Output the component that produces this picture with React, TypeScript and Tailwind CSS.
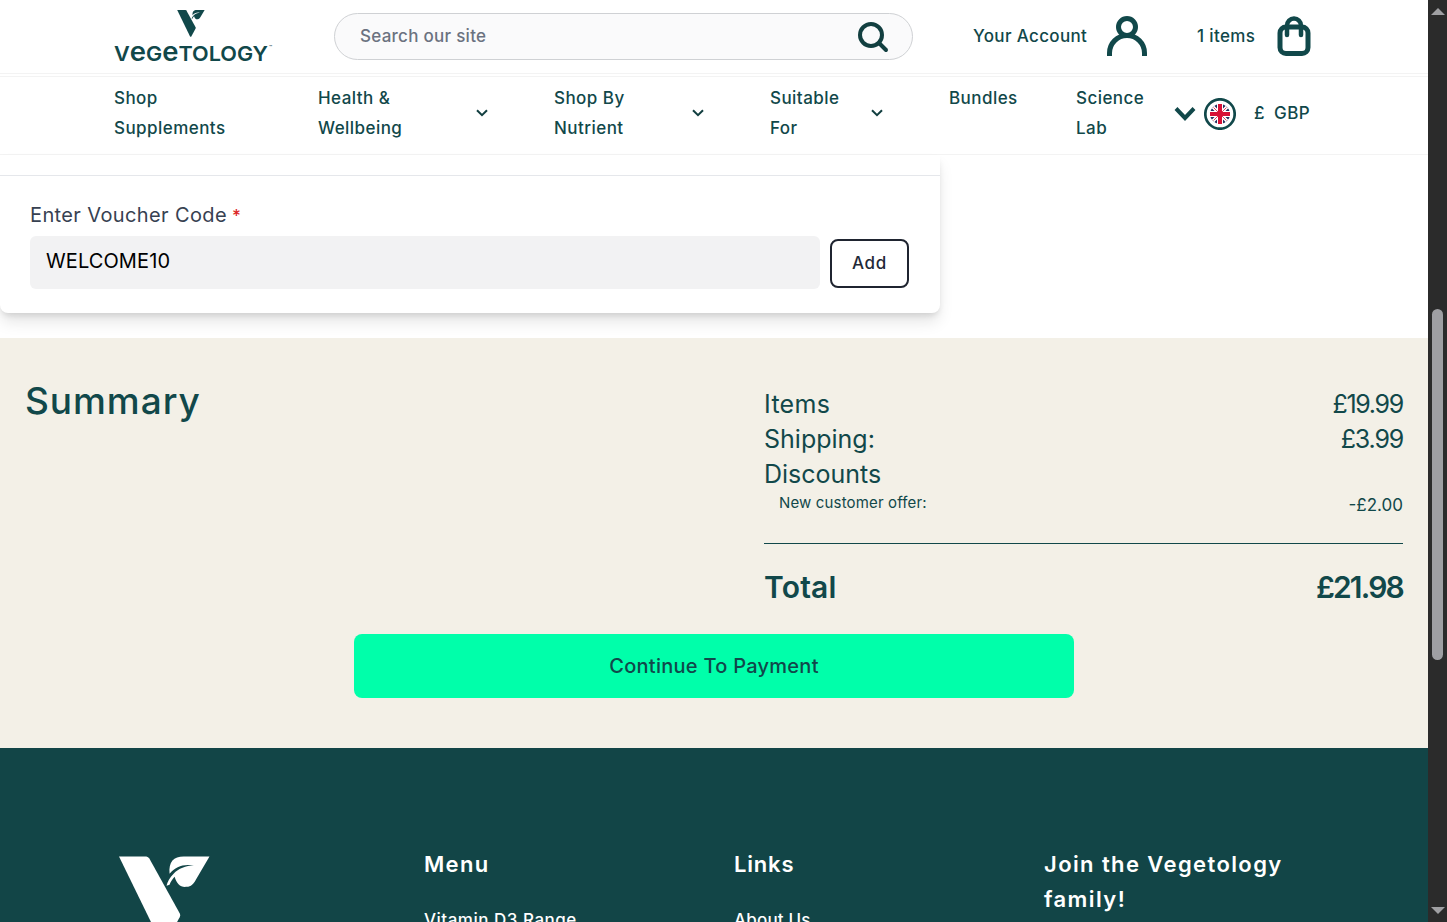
import React from 'react';

interface NavItem {
  lines: string[];
  width: string;
  hasMenu?: boolean;
}

const navItems: NavItem[] = [
  { lines: ['Shop', 'Supplements'], width: 'w-[204px]' },
  { lines: ['Health &', 'Wellbeing'], width: 'w-[236px]', hasMenu: true },
  { lines: ['Shop By', 'Nutrient'], width: 'w-[216px]', hasMenu: true },
  { lines: ['Suitable', 'For'], width: 'w-[179px]', hasMenu: true },
  { lines: ['Bundles'], width: 'w-[127px]' },
  { lines: ['Science', 'Lab'], width: 'w-[98px]' },
];

function ChevronIcon() {
  return (
    <svg className="h-2 w-3" viewBox="0 0 12 8" fill="none" stroke="#123f40" strokeWidth="2">
      <path d="M1 1.2 6 6.2 11 1.2" />
    </svg>
  );
}

function LeafMark({ className }: { className: string }) {
  return (
    <svg className={className} viewBox="0 0 90 88" fill="currentColor">
      <path d="M0 0H27Q29 .3 30 2L60 56Q61 58 60 60L46 86Q44 89 42 86Z" />
      <path d="M89.5 0H64C54 0 49 5 50 17C56 10 64 7 74 9C66 9 59 12 54 17C50 21 48 25 47 29L50 28C51 25 53 22 55 20C57 27 61 31 67 30C71 30 74 27 76 23Z" />
    </svg>
  );
}

function Logo() {
  return (
    <div className="w-[160px] text-[#11484a]">
      <LeafMark className="ml-[63px] h-[27px] w-7" />
      <svg className="-mt-2 block h-[42px] w-[160px] overflow-visible" viewBox="0 0 160 42" fill="currentColor">
        <text
          y="31.5"
          textLength="154"
          lengthAdjust="spacingAndGlyphs"
          className="font-['Inter'] text-[20.5px] font-semibold"
        >
          V<tspan fontSize="26">e</tspan>G<tspan fontSize="26">e</tspan>TOLOGY
        </text>
        <text x="155" y="20" className="font-['Inter'] text-[5px]">™</text>
      </svg>
    </div>
  );
}

function TopBar() {
  return (
    <div className="flex h-[74px] border-b border-[#f3f3f3] pl-[114px] pt-[10px]">
      <Logo />
      <div className="ml-[60px] mt-[3px] flex h-[47px] w-[579px] items-center justify-between rounded-full border border-[#cfd1d4] bg-[#fafafb] pl-[25px] pr-[23px]">
        <span className="text-[17px] tracking-[0.27px] text-[#6b7280]">Search our site</span>
        <svg className="h-8 w-8" viewBox="0 0 32 32" fill="none" stroke="#123f40" strokeWidth="4">
          <circle cx="14" cy="14" r="11" />
          <path d="M22 22 29 29" strokeLinecap="round" />
        </svg>
      </div>
      <div className="ml-[60px] flex h-[52px] items-center tracking-[0.35px]">
        <span className="w-[134px] whitespace-nowrap pt-px">Your Account</span>
        <svg className="h-10 w-10" viewBox="0 0 40 40" fill="none" stroke="#11484a" strokeWidth="5">
          <circle cx="20" cy="11" r="8.5" />
          <path d="M2.5 40V37a17.5 17.5 0 0 1 35 0v3" />
        </svg>
        <span className="ml-[50px] w-[80px] whitespace-nowrap pt-px">1 items</span>
        <svg className="h-10 w-[34px]" viewBox="0 0 34 40" fill="none" stroke="#11484a" strokeWidth="5">
          <rect x="3" y="11" width="28" height="26.5" rx="6" />
          <path d="M10 19V9.5a7 7 0 0 1 14 0V19" strokeWidth="4.5" strokeLinecap="round" />
        </svg>
      </div>
    </div>
  );
}

function FlagIcon() {
  return (
    <svg className="h-8 w-8" viewBox="0 0 32 32" fill="none">
      <circle cx="16" cy="16" r="14.7" fill="#fff" stroke="#11484a" strokeWidth="2.7" />
      <circle cx="16" cy="16" r="10" fill="#26315f" />
      <path d="M9 9 23 23M23 9 9 23" stroke="#fff" strokeWidth="3.4" />
      <path d="M16 6V26M6 16H26" stroke="#fff" strokeWidth="6" />
      <path d="M9.5 9.5 22.5 22.5M22.5 9.5 9.5 22.5" stroke="#d80f34" strokeWidth="0.8" />
      <path d="M16 6V26M6 16H26" stroke="#d80f34" strokeWidth="4" />
    </svg>
  );
}

function NavBar() {
  return (
    <nav className="mt-[2px] flex h-[79px] border-y border-[#f3f3f3] pl-[114px] pt-[6px] leading-[30px] tracking-[0.45px]">
      {navItems.map((item) => (
        <div key={item.lines.join(' ')} className={`flex shrink-0 justify-between ${item.width}`}>
          <div className="whitespace-nowrap">
            {item.lines.map((line) => (
              <div key={line}>{line}</div>
            ))}
          </div>
          {item.hasMenu && (
            <div className="flex h-[60px] items-center pr-[66px]">
              <ChevronIcon />
            </div>
          )}
        </div>
      ))}
      <div className="flex h-[61px] items-center">
        <svg className="h-4 w-[22px]" viewBox="0 0 22 16" fill="none" stroke="#11484a" strokeWidth="4">
          <path d="M2 2.5 11 12 20 2.5" />
        </svg>
        <div className="ml-2">
          <FlagIcon />
        </div>
        <span className="ml-[18px] w-5 pb-px">£</span>
        <span className="pb-px">GBP</span>
      </div>
    </nav>
  );
}

function VoucherForm() {
  return (
    <div className="h-[183px] bg-white">
      <div className="h-[158px] w-[940px] rounded-b-lg bg-white pt-5 shadow-[0_10px_15px_-1px_rgba(0,0,0,0.1),0_4px_6px_-2px_rgba(0,0,0,0.12)]">
        <div className="border-t border-[#e5e7eb] pl-[30px] pt-[25px]">
          <label className="block h-[29px] text-[20px] font-normal leading-[28px] tracking-[0.38px] text-[#374151]">
            Enter Voucher Code<span className="ml-[5px] text-[17px] font-medium text-[#dc2626]">*</span>
          </label>
          <div className="mt-[6px] flex gap-[10px]">
            <div className="h-[53px] w-[790px] rounded-md bg-[#f2f2f3] pl-4 text-[20px] font-normal leading-[51px] tracking-[0.1px] text-black">
              WELCOME10
            </div>
            <button className="mt-[3px] h-[49px] w-[79px] rounded-lg border-2 border-[#1f2430] bg-white tracking-[0.7px] text-[#1f2937]">
              Add
            </button>
          </div>
        </div>
      </div>
    </div>
  );
}

function Summary() {
  return (
    <section className="h-[410px] bg-[#f3f0e7] px-[25px] pt-[41px]">
      <div className="flex justify-between">
        <h2 className="text-[37px] leading-[44px] tracking-[0.95px]">Summary</h2>
        <div className="w-[639px] pt-2 text-[25px] font-normal leading-[35px]">
          <div className="flex justify-between">
            <span className="tracking-[0.3px]">Items</span>
            <span className="tracking-[-1.3px]">£19.99</span>
          </div>
          <div className="flex justify-between">
            <span>Shipping:</span>
            <span className="tracking-[-1.2px]">£3.99</span>
          </div>
          <div>Discounts</div>
          <div className="flex justify-between pl-[15px] text-[15px] leading-[22px]">
            <span className="tracking-[0.15px]">New customer offer:</span>
            <span className="pt-[2px] text-[17px]">-£2.00</span>
          </div>
          <div className="mt-[27px] flex h-[91px] justify-between border-t border-[#11484a] pt-[26px] text-[30px] font-semibold">
            <span className="tracking-[0.2px]">Total</span>
            <span className="tracking-[-1.8px]">£21.98</span>
          </div>
        </div>
      </div>
      <button className="mx-auto block h-16 w-[720px] rounded-lg bg-[#00ffaa] text-[20px] tracking-[0.27px]">
        Continue To Payment
      </button>
    </section>
  );
}

function Footer() {
  return (
    <footer className="flex h-[174px] overflow-hidden bg-[#124547] pl-[119px] pt-[99px] text-white">
      <div className="w-[305px] shrink-0 pt-[9px]">
        <LeafMark className="h-[90px] w-[91px]" />
      </div>
      <div className="w-[310px] shrink-0">
        <h3 className="text-[22px] font-semibold leading-[35px] tracking-[1.3px]">Menu</h3>
        <p className="mt-[23px] leading-[30px] tracking-[0.5px]">Vitamin D3 Range</p>
      </div>
      <div className="w-[310px] shrink-0">
        <h3 className="text-[22px] font-semibold leading-[35px] tracking-[0.8px]">Links</h3>
        <p className="mt-[23px] leading-[30px] tracking-[0.2px]">About Us</p>
      </div>
      <h3 className="whitespace-nowrap text-[22px] font-semibold leading-[35px] tracking-[1.4px]">
        Join the Vegetology
        <br />
        family!
      </h3>
    </footer>
  );
}

function Scrollbar() {
  return (
    <div className="flex h-full w-[19px] flex-col items-center bg-[#2b2b2b]">
      <svg className="mt-2 h-[7px] w-[14px]" viewBox="0 0 14 7" fill="#a0a0a3">
        <path d="M7 0 14 7H0Z" />
      </svg>
      <div className="mt-[294px] h-[351px] w-[11px] rounded-full bg-[#9f9fa3]" />
      <svg className="mb-2 mt-auto h-[7px] w-[14px]" viewBox="0 0 14 7" fill="#a0a0a3">
        <path d="M0 0H14L7 7Z" />
      </svg>
    </div>
  );
}

export default function App() {
  return (
    <div className="flex h-[922px] w-[1447px] overflow-hidden bg-white font-['Inter',sans-serif] text-[17px] font-medium text-[#11484a]">
      <div className="w-[1428px]">
        <header>
          <TopBar />
          <NavBar />
        </header>
        <VoucherForm />
        <Summary />
        <Footer />
      </div>
      <Scrollbar />
    </div>
  );
}
